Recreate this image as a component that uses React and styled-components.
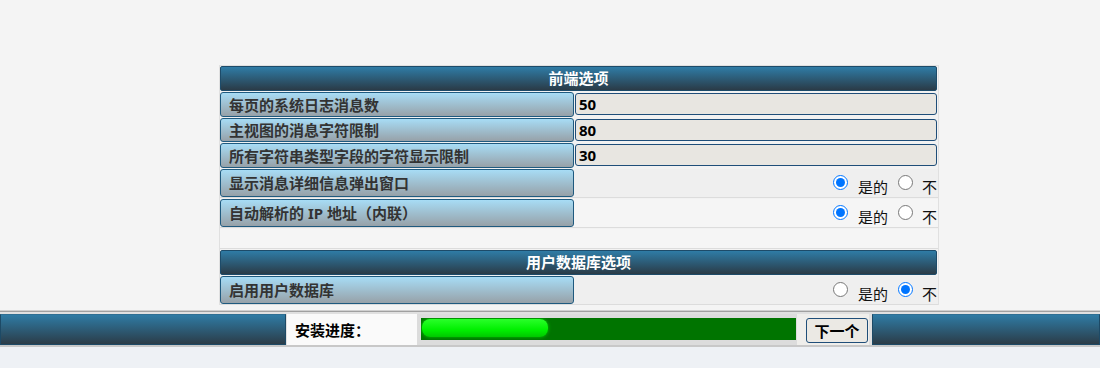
import React from "react";
import styled, { createGlobalStyle } from "styled-components";

const GlobalStyle = createGlobalStyle`
  html, body {
    margin: 0;
    padding: 0;
    background: #f4f4f4;
    font-family: "Noto Sans", "Noto Sans CJK SC", sans-serif;
  }
`;

const Page = styled.div`
  width: 1100px;
  height: 368px;
  display: flex;
  flex-direction: column;
  overflow: hidden;
`;

const Main = styled.div`
  height: 310px;
  box-sizing: border-box;
  padding: 65px 0 0 219px;
`;

const Panel = styled.div`
  width: 720px;
  box-sizing: border-box;
  background: #f2f2f2;
  border: 1px solid #e0e0e0;
  border-bottom: none;
  display: flex;
  flex-direction: column;
  gap: 1px;
`;

const SectionHeader = styled.div`
  height: 25px;
  box-sizing: border-box;
  margin-right: 1px;
  border: 1px solid #1d4b69;
  border-radius: 2px;
  background: linear-gradient(#2f7ca6, #2a3b47);
  color: #fff;
  font-weight: bold;
  font-size: 15px;
  line-height: 23px;
  text-align: center;
`;

const Row = styled.div`
  display: grid;
  grid-template-columns: 354px 362px;
  column-gap: 1px;
  height: ${(p) => (p.$radio ? "28px" : "24.5px")};
  background: ${(p) => p.$bg || "transparent"};
  border-bottom: ${(p) => (p.$radio ? "1px solid #dcdcdc" : "none")};
`;

const Label = styled.div`
  box-sizing: border-box;
  height: 100%;
  border: 1px solid #1f5a7f;
  border-radius: 3px;
  background: linear-gradient(#a7dcf5, #97a1a8);
  color: #333;
  font-weight: bold;
  font-size: 15px;
  padding-left: 8px;
  display: flex;
  align-items: center;
  white-space: nowrap;
`;

const TextInput = styled.input`
  align-self: center;
  box-sizing: border-box;
  height: 22px;
  width: 362px;
  margin: 0;
  border: 1px solid #1f4e79;
  border-radius: 3px;
  background: #e8e6e1;
  color: #000;
  font-family: "Noto Sans", "Noto Sans CJK SC", sans-serif;
  font-weight: bold;
  font-size: 15px;
  padding: 0 3px;
  outline: none;
`;

const RadioGroup = styled.div`
  display: flex;
  align-items: center;
  justify-content: flex-end;
  overflow: hidden;
  white-space: nowrap;
`;

const Radio = styled.input`
  width: 15px;
  height: 15px;
  margin: 0 ${(p) => p.$gap}px 0 0;
  accent-color: #0075ff;
  flex: none;
`;

const RadioText = styled.span`
  font-size: 15px;
  color: #111;
  padding-top: 7px;
  margin-right: ${(p) => p.$gap || 0}px;
  flex: none;
`;

const Spacer = styled.div`
  height: 19px;
  background: #f5f5f5;
  border-bottom: 1px solid #dcdcdc;
`;

const BottomWrap = styled.div`
  border-top: 1px solid #d0d0d0;
  border-bottom: 2px solid #c8c8c8;
  background: #e0e0e0;
`;

const BottomInner = styled.div`
  border-top: 1px solid #a0a0a0;
  padding-top: 2px;
  display: flex;
  height: 31px;
`;

const GradCell = styled.div`
  box-sizing: border-box;
  width: ${(p) => (p.$w ? p.$w + "px" : "auto")};
  flex: ${(p) => (p.$w ? "none" : "1")};
  border: 1px solid #1d4a66;
  border-top-color: #2f6f93;
  background: linear-gradient(#2f7ba4, #2b3c48);
`;

const InfoCell = styled.div`
  width: 130px;
  margin-left: 1px;
  background: #fafafa;
  font-weight: bold;
  font-size: 15px;
  color: #000;
  padding-left: 8px;
  box-sizing: border-box;
  display: flex;
  align-items: center;
`;

const ProgressCell = styled.div`
  width: 380px;
  box-sizing: border-box;
  background: #dcdcdc;
  padding: 4px 0 0 4px;
`;

const Track = styled.div`
  width: 375px;
  height: 22px;
  background: #007400;
  position: relative;
  overflow: hidden;
`;

const Fill = styled.div`
  position: absolute;
  left: 1px;
  top: 1px;
  height: 18px;
  border-radius: 8px;
  background: linear-gradient(#2aff2a, #00f000 60%, #00c800);
  box-shadow: 0 0 3px 1px rgba(0, 210, 0, 0.55);
`;

const ButtonCell = styled.div`
  width: 72px;
  background: #efeeeb;
  box-sizing: border-box;
  padding: 4px 0 0 9px;
  margin-right: 3px;
`;

const NextButton = styled.button`
  width: 62px;
  height: 25px;
  box-sizing: border-box;
  border: 1px solid #1f4e79;
  border-radius: 3px;
  background: #ebe9e4;
  font-family: "Noto Sans CJK SC", sans-serif;
  font-weight: bold;
  font-size: 15px;
  color: #000;
  padding: 0;
  line-height: 21px;
`;

const Footer = styled.div`
  flex: 1;
  background: #eef1f5;
`;

function RadioRow({ label, yes, bg }) {
  return (
    <Row $radio $bg={bg}>
      <Label>{label}</Label>
      <RadioGroup>
        <Radio type="radio" defaultChecked={yes} name={label} $gap={10} />
        <RadioText $gap={10}>是的</RadioText>
        <Radio type="radio" defaultChecked={!yes} name={label} $gap={9} />
        <RadioText>不</RadioText>
      </RadioGroup>
    </Row>
  );
}

const textOptions = [
  ["每页的系统日志消息数", "50"],
  ["主视图的消息字符限制", "80"],
  ["所有字符串类型字段的字符显示限制", "30"],
];

export default function App() {
  const progress = 126;
  return (
    <Page>
      <GlobalStyle />
      <Main>
        <Panel>
          <SectionHeader>前端选项</SectionHeader>
          {textOptions.map(([label, value]) => (
            <Row key={label}>
              <Label>{label}</Label>
              <TextInput defaultValue={value} />
            </Row>
          ))}
          <RadioRow label="显示消息详细信息弹出窗口" yes bg="#efefef" />
          <RadioRow label="自动解析的 IP 地址（内联）" yes bg="#f5f5f5" />
          <Spacer />
          <SectionHeader>用户数据库选项</SectionHeader>
          <RadioRow label="启用用户数据库" yes={false} bg="#efefef" />
        </Panel>
      </Main>
      <BottomWrap>
        <BottomInner>
          <GradCell $w={286} />
          <InfoCell>安装进度：</InfoCell>
          <ProgressCell>
            <Track>
              <Fill style={{ width: progress }} />
            </Track>
          </ProgressCell>
          <ButtonCell>
            <NextButton>下一个</NextButton>
          </ButtonCell>
          <GradCell />
        </BottomInner>
      </BottomWrap>
      <Footer />
    </Page>
  );
}
